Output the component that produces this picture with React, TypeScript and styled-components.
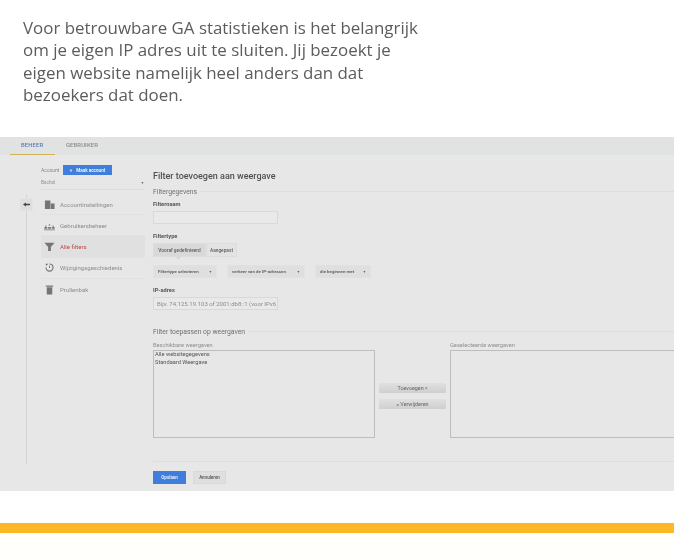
import React from "react";
import styled, { createGlobalStyle } from "styled-components";

const Global = createGlobalStyle`
  html, body { margin: 0; padding: 0; background: #fff; }
  body { width: 674px; height: 560px; overflow: hidden; font-family: "Open Sans", "Liberation Sans", sans-serif; }
  * { box-sizing: border-box; }
`;

const Page = styled.div`
  width: 674px;
  height: 560px;
  display: flex;
  flex-direction: column;
  overflow: hidden;
  background: #fff;
`;

const Intro = styled.p`
  margin: 0;
  height: 137px;
  padding: 17px 0 0 23px;
  width: 440px;
  font-family: "Open Sans", sans-serif;
  font-size: 16.9px;
  line-height: 22.3px;
  color: #5c5c5c;
  filter: blur(0.35px);
`;

const Shot = styled.div`
  height: 354px;
  width: 674px;
  flex: none;
  background: #e7e7e7;
  display: flex;
  flex-direction: column;
  overflow: hidden;
  filter: blur(0.6px);
  font-family: "Roboto", "Liberation Sans", sans-serif;
`;

const TabBar = styled.div`
  height: 18px;
  flex: none;
  background: #e1e2e2;
  display: flex;
  padding-left: 10px;
`;

const Tab = styled.div<{ $active?: boolean }>`
  width: ${(p) => (p.$active ? "45px" : "auto")};
  margin-right: ${(p) => (p.$active ? "11px" : "0")};
  height: 18px;
  padding: 5px 0 0 ${(p) => (p.$active ? "11px" : "0")};
  font-size: 5.9px;
  letter-spacing: 0.1px;
  font-weight: 500;
  color: ${(p) => (p.$active ? "#5d7eaf" : "#8a8a8a")};
  border-bottom: ${(p) => (p.$active ? "1px solid #d3b35a" : "none")};
`;

const Body = styled.div`
  flex: 1;
  display: flex;
  min-height: 0;
`;

const Rail = styled.div`
  width: 41px;
  flex: none;
  padding: 40px 0 0 20px;
  display: flex;
  flex-direction: column;
  align-items: flex-start;
`;

const RailStub = styled.div`
  width: 1px;
  height: 3px;
  margin-left: 6px;
  background: #d2d2d2;
`;

const BackButton = styled.div`
  width: 13px;
  height: 13px;
  background: #dedede;
  border: 1px solid #e2e2e2;
  display: flex;
  align-items: center;
  justify-content: center;
`;

const RailLine = styled.div`
  width: 1px;
  height: 253px;
  margin-left: 6px;
  background: #d2d2d2;
`;

const Side = styled.div`
  width: 104px;
  flex: none;
  padding-top: 10px;
`;

const AccountRow = styled.div`
  display: flex;
  align-items: center;
  height: 10px;
  gap: 4px;
  font-size: 5px;
  color: #888;
`;

const AccountLabel = styled.span`
  width: 18px;
`;

const CreateButton = styled.div`
  width: 49px;
  height: 10px;
  background: #3f7fdb;
  color: #e8f0fb;
  font-size: 4.6px;
  font-weight: 700;
  display: flex;
  align-items: center;
  justify-content: center;
  gap: 4px;
`;

const AccountSelect = styled.div`
  height: 14px;
  margin-top: 1px;
  border-bottom: 1px solid #dcdcdc;
  display: flex;
  align-items: center;
  justify-content: space-between;
  padding: 0 1px 0 0;
  font-size: 4.6px;
  color: #8a8a8a;
`;

const Caret = styled.span`
  font-size: 3.4px;
  color: #666;
`;

const NavList = styled.div`
  margin-top: 4px;
`;

const NavItem = styled.div<{ $active?: boolean; $last?: boolean }>`
  height: 21.2px;
  display: flex;
  align-items: center;
  padding-left: 3px;
  gap: 5px;
  font-size: 6px;
  color: ${(p) => (p.$active ? "#b8494a" : "#8c8c8c")};
  background: ${(p) => (p.$active ? "#e0e0e0" : "transparent")};
  border-bottom: ${(p) => (p.$last ? "none" : "1px solid #e1e1e1")};
`;

const Main = styled.div`
  flex: 1;
  padding: 15px 0 0 8px;
  min-width: 0;
`;

const Title = styled.div`
  font-size: 9px;
  line-height: 12px;
  height: 12px;
  color: #505050;
  font-weight: 500;
`;

const Legend = styled.div<{ $top: number }>`
  display: flex;
  align-items: center;
  gap: 4px;
  margin-top: ${(p) => p.$top}px;
  height: 9px;
  font-size: 6.8px;
  color: #707070;
  &::after {
    content: "";
    flex: 1;
    height: 1px;
    background: #dddddd;
  }
`;

const FieldLabel = styled.div<{ $top: number }>`
  margin-top: ${(p) => p.$top}px;
  height: 8px;
  line-height: 8px;
  font-size: 5.7px;
  font-weight: 700;
  color: #555;
`;

const TextBox = styled.div`
  width: 125px;
  height: 13px;
  margin-top: 3px;
  background: #e9e9e9;
  border: 1px solid #d9d9d9;
  padding-left: 3px;
  font-size: 6px;
  line-height: 11px;
  color: #8c8c8c;
  white-space: nowrap;
  overflow: hidden;
`;

const Segments = styled.div`
  display: flex;
  margin-top: 3px;
`;

const Segment = styled.div<{ $active?: boolean; $w: number }>`
  width: ${(p) => p.$w}px;
  height: 14px;
  background: ${(p) => (p.$active ? "#d9d9d9" : "#e3e3e3")};
  border: 1px solid #dcdcdc;
  font-size: 4.8px;
  font-weight: 500;
  color: #5e5e5e;
  display: flex;
  align-items: center;
  justify-content: center;
  position: relative;
  ${(p) =>
    p.$active
      ? `&::after { content: ""; position: absolute; left: 22px; bottom: -3px; width: 5px; height: 5px; background: #d9d9d9; transform: rotate(45deg); }`
      : ""}
`;

const SelectRow = styled.div`
  display: flex;
  gap: 10px;
  margin-top: 8px;
`;

const Select = styled.div<{ $w: number }>`
  width: ${(p) => p.$w}px;
  height: 13px;
  background: #dfdfdf;
  border: 1px solid #e1e1e1;
  padding: 0 4px;
  font-size: 4.4px;
  font-weight: 700;
  color: #666;
  display: flex;
  align-items: center;
  justify-content: space-between;
  white-space: nowrap;
`;

const Picker = styled.div`
  display: flex;
  width: 560px;
`;

const PickerColumn = styled.div<{ $w: number }>`
  width: ${(p) => p.$w}px;
  flex: none;
`;

const PickerLabel = styled.div`
  height: 14px;
  padding-top: 6px;
  line-height: 7px;
  font-size: 5.7px;
  color: #8e8e8e;
`;

const ListBox = styled.div`
  height: 88px;
  background: #e7e7e7;
  border: 1px solid #bdbdbd;
  padding: 0 1px;
  font-size: 5.7px;
  line-height: 7.6px;
  color: #555;
`;

const MoveColumn = styled.div`
  width: 75px;
  flex: none;
  padding: 47px 4px 0;
  display: flex;
  flex-direction: column;
  gap: 6px;
`;

const MoveButton = styled.div`
  height: 10px;
  background: linear-gradient(#e0e0e0, #cfcfcf);
  border-radius: 1px;
  font-size: 5.4px;
  color: #666;
  display: flex;
  align-items: center;
  justify-content: center;
`;

const Divider = styled.div`
  margin-top: 23px;
  height: 1px;
  background: #dddddd;
`;

const Actions = styled.div`
  display: flex;
  gap: 7px;
  margin-top: 9px;
`;

const ActionButton = styled.div<{ $primary?: boolean }>`
  width: 33px;
  height: 13px;
  background: ${(p) => (p.$primary ? "#3f7fdb" : "#dfdfdf")};
  border: 1px solid ${(p) => (p.$primary ? "#3f7fdb" : "#d9d9d9")};
  color: ${(p) => (p.$primary ? "#e2ecfa" : "#666")};
  font-size: 4.5px;
  font-weight: 700;
  display: flex;
  align-items: center;
  justify-content: center;
`;

const Gap = styled.div`
  height: 32px;
  flex: none;
`;

const Stripe = styled.div`
  height: 10px;
  flex: none;
  background: #fdb827;
`;

const Footer = styled.div`
  flex: 1;
  background: #fffffb;
`;

const NavIcon = styled.svg`
  width: 11px;
  height: 11px;
  flex: none;
  fill: #757575;
`;

const BackIcon = styled.svg`
  width: 7px;
  height: 5px;
  flex: none;
  fill: #444;
`;

export default function App() {
  return (
    <Page>
      <Global />
      <Intro>
        Voor betrouwbare GA statistieken is het belangrijk
        <br />
        om je eigen IP adres uit te sluiten. Jij bezoekt je
        <br />
        eigen website namelijk heel anders dan dat
        <br />
        bezoekers dat doen.
      </Intro>
      <Shot>
        <TabBar>
          <Tab $active>BEHEER</Tab>
          <Tab>GEBRUIKER</Tab>
        </TabBar>
        <Body>
          <Rail>
            <RailStub />
            <BackButton>
              <BackIcon viewBox="0 0 7 5">
                <path d="M0 2.500 3 .5v1.300h4v1.400H3v1.300z" />
              </BackIcon>
            </BackButton>
            <RailLine />
          </Rail>
          <Side>
            <AccountRow>
              <AccountLabel>Account</AccountLabel>
              <CreateButton>
                <span>+</span>
                <span>Maak account</span>
              </CreateButton>
            </AccountRow>
            <AccountSelect>
              <span>Bochol</span>
              <Caret>▼</Caret>
            </AccountSelect>
            <NavList>
              <NavItem>
                <NavIcon viewBox="0 0 12 12">
                  <path d="M1 1.500h6V11H1zM7.500 5H11.500v6h-4z" />
                </NavIcon>
                Accountinstellingen
              </NavItem>
              <NavItem>
                <NavIcon viewBox="0 0 12 12">
                  <path d="M0.500 9.500V7.500h3v2zM4.500 9.500V7.500h3v2zM8.500 9.500V7.500h3v2zM1 7a1 1 0 0 1 2 0zM5 6a1 1.300 0 0 1 2 0zM9 7a1 1 0 0 1 2 0zM0 10.300h12v1H0z" />
                </NavIcon>
                Gebruikersbeheer
              </NavItem>
              <NavItem $active>
                <NavIcon viewBox="0 0 12 12">
                  <path d="M0.500 2h11L7.500 6.500V11h-3V6.500z" />
                </NavIcon>
                Alle filters
              </NavItem>
              <NavItem>
                <NavIcon viewBox="0 0 12 12">
                  <path d="M6 1.500a4.500 4.500 0 1 1-4.500 4.500h1.300A3.200 3.200 0 1 0 6 2.800zM1.800 1.800l3 .2-2.600 2.400zM5.500 4h1v2.500h-1z" />
                </NavIcon>
                Wijzigingsgeschiedenis
              </NavItem>
              <NavItem $last>
                <NavIcon viewBox="0 0 12 12">
                  <path d="M2 1.500h8v1.500H2zM3 3.500h6V11.500H3z" />
                </NavIcon>
                Prullenbak
              </NavItem>
            </NavList>
          </Side>
          <Main>
            <Title>Filter toevoegen aan weergave</Title>
            <Legend $top={5}>Filtergegevens</Legend>
            <FieldLabel $top={4}>Filternaam</FieldLabel>
            <TextBox />
            <FieldLabel $top={8}>Filtertype</FieldLabel>
            <Segments>
              <Segment $active $w={53}>
                Vooraf gedefinieerd
              </Segment>
              <Segment $w={31}>Aangepast</Segment>
            </Segments>
            <SelectRow>
              <Select $w={64}>
                Filtertype selecteren <Caret>▼</Caret>
              </Select>
              <Select $w={78}>
                verkeer van de IP-adressen <Caret>▼</Caret>
              </Select>
              <Select $w={56}>
                die beginnen met <Caret>▼</Caret>
              </Select>
            </SelectRow>
            <FieldLabel $top={8}>IP-adres</FieldLabel>
            <TextBox>Bijv. 74.125.19.103 of 2001:db8::1 (voor IPv6</TextBox>
            <Legend $top={17}>Filter toepassen op weergaven</Legend>
            <Picker>
              <PickerColumn $w={222}>
                <PickerLabel>Beschikbare weergaven</PickerLabel>
                <ListBox>
                  Alle websitegegevens
                  <br />
                  Standaard Weergave
                </ListBox>
              </PickerColumn>
              <MoveColumn>
                <MoveButton>Toevoegen »</MoveButton>
                <MoveButton>« Verwijderen</MoveButton>
              </MoveColumn>
              <PickerColumn $w={263}>
                <PickerLabel>Geselecteerde weergaven</PickerLabel>
                <ListBox />
              </PickerColumn>
            </Picker>
            <Divider />
            <Actions>
              <ActionButton $primary>Opslaan</ActionButton>
              <ActionButton>Annuleren</ActionButton>
            </Actions>
          </Main>
        </Body>
      </Shot>
      <Gap />
      <Stripe />
      <Footer />
    </Page>
  );
}
